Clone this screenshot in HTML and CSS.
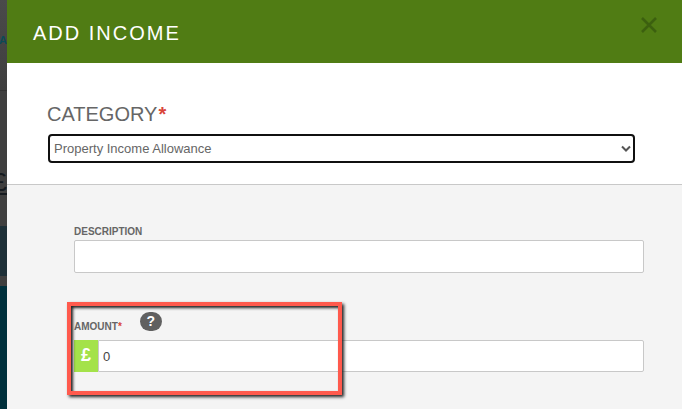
FILE: index.html
```html
<!DOCTYPE html>
<html lang="en">
<head>
  <meta charset="UTF-8">
  <meta name="viewport" content="width=device-width, initial-scale=1.0">
  <title>Add Income</title>
  <link rel="stylesheet" href="styles.css">
</head>
<body>
  <div class="backdrop" aria-hidden="true">
    <div class="backdrop-nav"><span>IA</span></div>
    <div class="backdrop-total"><span>£</span></div>
    <div class="backdrop-row"></div>
    <div class="backdrop-gap"></div>
    <div class="backdrop-footer"></div>
  </div>

  <form class="modal">
    <header class="modal-header">
      <h1>ADD INCOME</h1>
      <button type="button" class="close" aria-label="Close">
        <svg width="16" height="16" viewBox="0 0 16 16">
          <path d="M1 1L15 15M15 1L1 15" stroke="#3c600f" stroke-width="2.6" fill="none"/>
        </svg>
      </button>
    </header>

    <section class="category">
      <label for="category">CATEGORY<span class="required">*</span></label>
      <div class="select-wrap">
        <select id="category">
          <option>Property Income Allowance</option>
        </select>
        <svg class="chevron" width="10" height="8" viewBox="0 0 10 8">
          <path d="M1 1.5L5 5.5L9 1.5" stroke="#555" stroke-width="2" fill="none"/>
        </svg>
      </div>
    </section>

    <section class="details">
      <div class="field">
        <label for="description">DESCRIPTION</label>
        <input type="text" id="description">
      </div>

      <div class="field amount">
        <div class="label-row">
          <label for="amount">AMOUNT<span class="required">*</span></label>
          <button type="button" class="help" aria-label="Help">?</button>
        </div>
        <div class="input-group">
          <span class="currency">£</span>
          <input type="text" id="amount" value="0">
        </div>
        <div class="highlight"></div>
      </div>
    </section>
  </form>
</body>
</html>
```
FILE: styles.css
```css
* {
  box-sizing: border-box;
}

body {
  margin: 0;
  display: flex;
  min-height: 100vh;
  background-color: #f4f4f4;
  font-family: "Liberation Sans", Arial, sans-serif;
  color: #666;
  overflow: hidden;
}

h1 {
  margin: 0;
  font-size: 20px;
  line-height: 24px;
  font-weight: normal;
  letter-spacing: 2px;
}

/* dimmed page behind the modal */
.backdrop {
  width: 7px;
  flex-shrink: 0;
  display: flex;
  flex-direction: column;
  overflow: hidden;
  background-color: #3f3f3f;
}

.backdrop-nav {
  height: 91px;
  padding-top: 33px;
  border-bottom: 1px solid #333;
  background: linear-gradient(#4a4a4a, #3f3f3f);
  color: #0d4a56;
  font-size: 11px;
  line-height: 14px;
  font-weight: bold;
  display: flex;
  justify-content: flex-end;
}

.backdrop-total {
  height: 135px;
  padding-top: 78px;
  color: #151a1f;
  font-size: 26px;
  line-height: 26px;
  text-decoration: underline;
  display: flex;
  justify-content: flex-end;
}

.backdrop-row {
  height: 50px;
  background-color: #1d2f37;
}

.backdrop-gap {
  height: 10px;
}

.backdrop-footer {
  flex: 1;
  background-color: #00303c;
}

.modal {
  flex: 1;
  display: flex;
  flex-direction: column;
  background-color: #fff;
}

.modal-header {
  display: flex;
  justify-content: space-between;
  align-items: flex-start;
  padding: 17px 25px 17px 26px;
  height: 63px;
  background-color: #507c14;
  color: #fff;
}

.modal-header h1 {
  padding-top: 4px;
}

.close {
  display: flex;
  padding: 0;
  border: none;
  background: none;
  cursor: pointer;
}

.required {
  color: #d9453a;
}

.category {
  padding: 39px 47px 21px 40px;
  border-bottom: 1px solid #c8c8c8;
}

.category label {
  display: block;
  font-size: 20px;
  line-height: 24px;
  padding-bottom: 8px;
}

.category .required {
  padding-left: 1px;
  font-weight: bold;
}

.select-wrap {
  position: relative;
  margin-left: 1px;
}

.select-wrap select {
  display: block;
  width: 100%;
  height: 29px;
  padding: 0 4px;
  border: 2px solid #101010;
  border-radius: 4px;
  background-color: #fff;
  color: #666;
  font-family: inherit;
  font-size: 13px;
  appearance: none;
  outline: none;
}

.chevron {
  position: absolute;
  right: 4px;
  top: 11px;
  pointer-events: none;
}

.details {
  flex: 1;
  padding: 41px 38px 36px 67px;
  background-color: #f4f4f4;
}

.field label {
  display: block;
  font-size: 10px;
  line-height: 12px;
  font-weight: bold;
  padding-bottom: 2px;
}

.field input {
  display: block;
  width: 100%;
  height: 33px;
  padding: 0 4px;
  border: 1px solid #c8c8c8;
  border-radius: 2px;
  background-color: #fff;
  color: #444;
  font-family: inherit;
  font-size: 13px;
}

.amount {
  position: relative;
  margin-top: 39px;
}

.label-row {
  display: flex;
  align-items: flex-end;
  height: 28px;
  gap: 18px;
}

.label-row label {
  padding-bottom: 7px;
}

.help {
  align-self: flex-start;
  width: 22px;
  height: 19px;
  padding: 0;
  border: none;
  border-radius: 10px;
  background-color: #606060;
  color: #fff;
  font-family: inherit;
  font-size: 14px;
  line-height: 19px;
  font-weight: bold;
}

.input-group {
  display: flex;
}

.currency {
  width: 24px;
  flex-shrink: 0;
  background-color: #a4e24a;
  color: #fff;
  font-size: 18px;
  line-height: 30px;
  font-weight: bold;
  text-align: center;
}

.input-group input {
  height: 32px;
  border-radius: 0 2px 2px 0;
}

/* callout drawn over the amount field */
.highlight {
  position: absolute;
  top: -10px;
  left: -7px;
  width: 275px;
  height: 93px;
  border: 4px solid #ff5a4d;
  box-shadow: 2px 2px 3px #222, inset 2px 2px 3px #222;
  pointer-events: none;
}
```
